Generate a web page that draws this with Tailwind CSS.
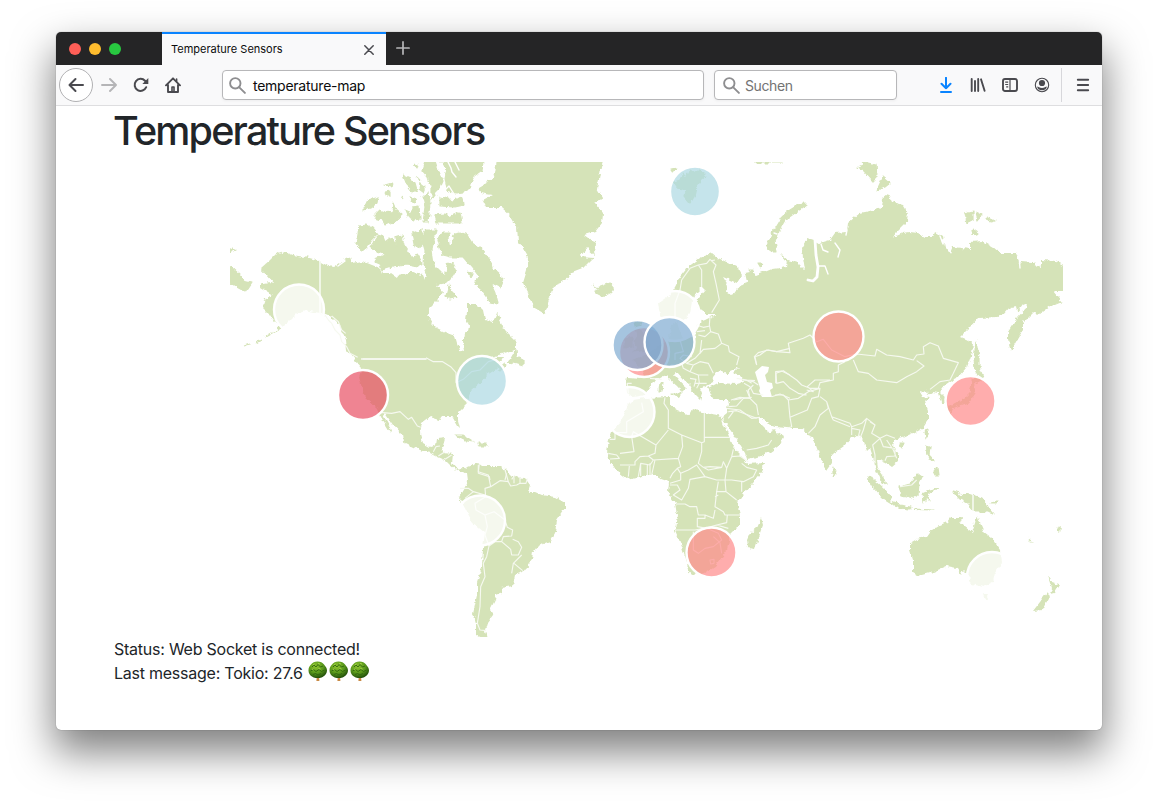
<!DOCTYPE html>
<html lang="de">
<head>
<meta charset="utf-8">
<title>Temperature Sensors</title>
<script src="https://cdn.jsdelivr.net/npm/@tailwindcss/browser@4"></script>
</head>
<body class="h-[810px] w-[1158px] overflow-hidden bg-white px-14 pt-8 font-['Inter',sans-serif]">
<div class="flex h-[698px] w-[1046px] flex-col overflow-hidden rounded-[5px] bg-white shadow-[0_0_1px_rgba(0,0,0,0.5),0_20px_40px_2px_rgba(0,0,0,0.5)]">
  <!-- tab strip -->
  <div class="flex h-[33px] shrink-0 bg-[#252526]">
    <div class="flex w-[106px] items-center gap-2 pl-[13px] pt-px">
      <span class="size-3 rounded-full bg-[#ff5f57]"></span><span class="size-3 rounded-full bg-[#febc2e]"></span><span class="size-3 rounded-full bg-[#28c840]"></span>
    </div>
    <div class="flex w-[224px] items-center justify-between border-t-2 border-[#0a84ff] bg-[#f9f9fa] pl-[9px] pr-3">
      <span class="text-[11px] text-[#0c0c0d]">Temperature Sensors</span>
      <svg class="size-[10px]" viewBox="0 0 10 10" fill="none" stroke="#4a4a4f" stroke-width="1.5" stroke-linecap="round"><path d="M.8.8l8.4 8.4M9.2.8L.8 9.2"/></svg>
    </div>
    <svg class="ml-[10px] mt-[9px] size-[14px]" viewBox="0 0 14 14" stroke="#b8b8ba" stroke-width="1.7" stroke-linecap="round"><path d="M7 .9v12.2M.9 7h12.2"/></svg>
  </div>
  <!-- toolbar -->
  <div class="flex h-[41px] shrink-0 items-center border-b border-[#dedee0] bg-[#f9f9fa]">
    <div class="ml-[3px] flex size-[34px] items-center justify-center rounded-full border border-[#b1b1b3] bg-white">
      <svg class="size-4" viewBox="0 0 16 16" fill="none" stroke="#4a4a4f" stroke-width="2" stroke-linecap="round" stroke-linejoin="round"><path d="M15 8H1.5M7.5 2l-6 6 6 6"/></svg>
    </div>
    <svg class="ml-2 size-4" viewBox="0 0 16 16" fill="none" stroke="#b5b5b7" stroke-width="1.9" stroke-linecap="round" stroke-linejoin="round"><path d="M1 8h13.5M9 2l6 6-6 6"/></svg>
    <svg class="ml-4 size-4" viewBox="0 0 16 16" fill="none" stroke="#4a4a4f" stroke-width="2" stroke-linecap="round"><path d="M13.2 10.2A6 6 0 1 1 12 3.7L13.5 5.3"/><path d="M15.3 1v6H9.3z" fill="#4a4a4f" stroke="none"/></svg>
    <svg class="ml-4 size-4" viewBox="0 0 16 16" fill="none" stroke="#4a4a4f" stroke-width="1.9" stroke-linecap="round" stroke-linejoin="round"><path d="M1 8.3L8 1.3l7 7M3 8v7h10V8"/><path d="M7 14.8V10h2v4.8M11.6 2v2.2" stroke-width="1.6"/></svg>
    <div class="ml-[41px] flex h-[30px] w-[482px] items-center rounded-[4px] border border-[#b7b7b9] bg-white pl-[6px] shadow-[0_1px_3px_rgba(0,0,0,0.05)]">
      <svg class="size-[17px]" viewBox="0 0 17 17" fill="none" stroke="#8e8e90" stroke-width="1.9" stroke-linecap="round"><circle cx="6.3" cy="6.3" r="5.2"/><path d="M10.3 10.3l5.6 5.6"/></svg>
      <span class="ml-[7px] text-[14px] tracking-[-0.25px] text-[#0c0c0d]">temperature-map</span>
    </div>
    <div class="ml-[10px] flex h-[30px] w-[183px] items-center rounded-[4px] border border-[#b7b7b9] bg-white pl-2 shadow-[0_1px_3px_rgba(0,0,0,0.05)]">
      <svg class="size-[17px]" viewBox="0 0 17 17" fill="none" stroke="#8e8e90" stroke-width="1.9" stroke-linecap="round"><circle cx="6.3" cy="6.3" r="5.2"/><path d="M10.3 10.3l5.6 5.6"/></svg>
      <span class="ml-[5px] text-[14px] tracking-[-0.4px] text-[#737373]">Suchen</span>
    </div>
    <svg class="ml-[41px] size-4" viewBox="0 0 16 16" fill="none" stroke="#0a84ff" stroke-width="2" stroke-linecap="round" stroke-linejoin="round"><path d="M8 .8v10.400M3.500 6.800L8 11.300l4.500-4.500M3 15h10"/></svg>
    <svg class="ml-4 size-4" viewBox="0 0 16 16" fill="none" stroke="#4a4a4f" stroke-width="1.9" stroke-linecap="round"><path d="M1.700 2v12M5 4v10M8.200 2v12M11 2.300L14.600 13.800"/></svg>
    <svg class="ml-4 size-4" viewBox="0 0 16 16" fill="none" stroke="#4a4a4f" stroke-width="1.9"><rect x="1" y="2" width="14" height="12" rx="2"/><path d="M8 2v12M3.200 5.200h3M3.200 7.500h3M4.200 9.800h2" stroke-width="1.2"/></svg>
    <svg class="ml-4 size-4" viewBox="0 0 16 16" fill="#4a4a4f"><circle cx="8" cy="8" r="6.7" fill="none" stroke="#4a4a4f" stroke-width="1.1"/><circle cx="8" cy="6" r="3.1"/><path d="M3.200 9.400c1.200 0 2.300 1.500 4.800 1.500s3.600-1.500 4.800-1.500c0 2-2 3.800-4.800 3.800S3.200 11.400 3.200 9.400z"/></svg>
    <div class="ml-[11px] h-[34px] w-px bg-[#d7d7db]"></div>
    <svg class="ml-[13px] size-4" viewBox="0 0 16 16" stroke="#4a4a4f" stroke-width="1.9" stroke-linecap="round"><path d="M2.800 2.800h10.400M2.800 8h10.400M2.800 13.200h10.400"/></svg>
  </div>
  <!-- page -->
  <div class="flex flex-col pl-[58px] text-[#212529]">
    <h1 class="-ml-px h-[56px] pt-[1px] text-[39.5px] font-medium leading-[48px] tracking-[-1.8px]">Temperature Sensors</h1>
    <svg class="ml-[116px] h-[475px] w-[833px]" viewBox="230 162 833 475">
      <defs>
        <filter id="coast" filterUnits="userSpaceOnUse" x="220" y="152" width="853" height="495" color-interpolation-filters="sRGB">
          <feTurbulence type="fractalNoise" baseFrequency="0.2" numOctaves="3" seed="7" result="n"/>
          <feDisplacementMap in="SourceGraphic" in2="n" scale="5" xChannelSelector="R" yChannelSelector="G"/>
        </filter>
      </defs>
      <g fill="#d5e3b8" filter="url(#coast)">
        <!-- North America -->
        <path d="M261 268L270 260 275 255 284 252 292 255 305 257 319 261 328 266 333 267 342 261 350 257 352 263 362 261 372 265 380 268 382 273 390 273 397 278 398 275 408 273 413 273 423 275 425 280 428 273 432 267 433 263 440 270 445 275 447 263 453 262 457 270 453 277 447 283 437 285 443 292 440 297 430 307 427 315 432 323 437 328 447 333 455 336 457 343 460 350 464 351 463 342 463 336 468 332 469 325 466 320 467 312 467 304 477 304 483 310 485 320 492 323 497 312 500 320 505 330 512 337 517 342 517 349 512 351 492 357 503 357 498 367 495 370 487 375 480 383 470 392 468 403 458 413 458 420 460 428 457 425 453 418 452 416 443 416 440 420 430 417 422 423 420 433 423 443 430 447 436 445 437 439 445 438 442 448 443 453 453 454 452 463 458 470 463 468 468 471 461 473 455 469 450 465 445 460 438 457 430 453 425 452 413 447 403 442 402 435 393 425 385 413 383 415 389 425 392 434 387 428 380 417 377 408 365 397 362 388 359 377 362 368 355 360 347 350 346 340 343 333 338 323 332 317 322 313 313 312 305 310 297 313 292 318 283 327 275 332 280 326 275 320 272 319 268 313 262 307 265 298 273 295 268 292 260 287 262 283 273 282 267 275Z"/>
        <path fill="none" stroke="#d5e3b8" stroke-width="1.2" d="M281 328L272 333 265 337M261 340L256 343M250 344L244 346" />
        <g stroke="#d5e3b8" stroke-width="1.2" stroke-linejoin="round">
        <path d="M359 226L367 225 373 228 378 234 372 240 367 247 362 251 356 243 358 235ZM371 247L377 238 382 234 385 242 390 238 393 240 397 247 395 237 402 235 404 245 412 257 418 255 422 263 418 267 407 265 398 266 388 268 382 270 380 264 375 262 377 257 387 255 377 252ZM375 215L380 210 385 212 392 213 393 203 396 210 402 215 398 220 390 223 385 225 382 220 375 218ZM363 210L368 200 378 197 377 203 370 208ZM385 192L391 191 391 196 386 196ZM385 185L392 183 391 187ZM403 175L410 178 415 183 417 190 412 192 407 185ZM405 210L412 213 412 207 419 206 420 219 414 220 408 217ZM412 233L422 230 422 245 415 248ZM425 230L436 230 434 240 432 250 434 265 428 275 424 265 425 250 422 240ZM420 183L425 187 423 192 419 189ZM414 164L418 165 417 169ZM423 198L428 193 430 203 428 222 423 222 425 207ZM425 160L435 160 438 170 443 180 440 187 435 192 430 183 428 177 422 170ZM439 160L483 160 482 170 475 175 472 180 470 188 463 192 455 193 447 190 445 178 447 168ZM440 197L453 200 463 197 464 205 455 207 440 206ZM435 215L445 214 448 217 460 212 462 223 437 223ZM438 240L442 232 450 232 448 238 450 250 452 242 455 233 460 232 467 235 472 243 482 250 490 260 492 268 503 278 500 287 490 282 495 293 497 303 490 302 480 288 475 285 478 275 472 267 463 257 450 257 442 255ZM446 296L449 285 453 292 458 297 450 299ZM409 187L413 191M402 196L404 199M416 177L420 180M410 197L417 199 414 203ZM432 186L436 195 432 200ZM468 272L472 273 470 277ZM509 362L516 350 517 357 523 360 523 366 517 364ZM455 435L463 435 474 442 467 441ZM478 443L485 443 488 446 479 446ZM498 368L505 362 506 366 501 370Z"/>
        </g>
        <!-- Greenland, Iceland -->
        <path d="M497 158L495 173 490 180 478 187 480 193 492 195 483 200 487 208 502 208 510 215 517 227 518 242 522 247 528 257 527 270 523 283 528 293 533 307 545 314 548 303 553 288 560 283 568 278 572 272 585 267 594 258 580 257 587 248 595 255 596 243 585 235 595 232 602 223 603 213 595 203 603 198 597 188 599 180 601 167 604 158ZM592 284L598 287 606 284 611 282 615 287 611 293 603 297 597 294 594 291 598 289Z"/>
        <!-- South America -->
        <path d="M460 470L465 470 468 467 478 463 482 466 500 466 507 472 512 477 525 478 530 485 528 492 535 492 542 495 555 497 565 503 565 508 557 520 555 533 550 542 538 546 533 552 532 560 523 572 515 575 514 580 513 586 502 588 502 593 496 595 495 600 490 610 493 615 487 623 485 630 487 640 476 635 476 623 473 613 477 595 477 583 482 567 483 547 485 533 473 523 462 503 459 498 465 488 468 480 467 472Z"/>
        <!-- Europe and Asia -->
        <path d="M658 303L670 295 675 287 680 277 688 267 700 258 712 253 718 258 737 267 742 275 737 283 723 277 728 285 727 292 733 295 738 288 747 282 745 273 750 272 757 275 772 269 787 267 788 260 798 263 805 270 803 257 802 248 808 238 814 240 820 243 830 240 835 233 847 232 848 223 860 213 875 210 882 207 883 198 888 194 892 202 903 205 908 213 907 222 897 232 892 238 903 233 910 232 918 233 925 237 933 237 935 232 943 237 945 247 950 254 953 247 970 249 970 242 983 241 993 247 1000 253 1015 253 1019 264 1021 262 1033 263 1042 267 1042 260 1055 261 1068 267 1068 291 1053 291 1062 302 1050 307 1040 314 1033 313 1023 323 1023 330 1017 340 1011 351 1008 340 1008 332 1017 318 1027 307 1028 303 1023 305 1018 312 1017 306 1010 307 1003 315 997 317 978 318 970 327 960 337 967 340 973 343 972 353 967 367 958 377 952 380 945 385 940 392 945 397 944 403 941 403 938 393 933 392 928 395 927 390 920 392 923 397 930 398 925 402 928 410 928 420 923 428 913 433 902 438 895 440 893 445 898 455 898 462 892 467 885 462 880 460 877 460 878 468 883 475 887 486 882 482 876 470 873 457 870 448 867 451 863 440 858 435 852 437 843 447 832 455 832 463 827 470 822 462 815 443 813 437 808 435 805 430 800 428 787 428 775 427 770 425 763 418 758 417 760 423 767 430 768 433 775 429 778 433 784 437 780 445 770 452 757 457 747 459 745 453 737 440 727 425 722 417 727 413 729 403 728 400 720 400 712 397 708 388 712 386 718 383 737 384 744 382 742 377 733 373 739 367 730 371 727 375 722 371 717 372 713 377 712 383 705 387 700 388 702 393 700 400 695 395 690 385 683 379 677 372 674 374 680 382 687 388 682 393 678 387 668 378 662 376 655 380 650 387 645 395 633 397 627 393 626 383 627 377 645 378 640 367 632 360 645 355 660 345 668 340 672 325 677 322 680 332 683 338 695 337 697 323 705 320 717 314 705 314 697 308 698 298 705 290 702 287 697 292 692 302 690 313 682 322 673 317 662 317 659 310Z"/>
        <!-- Africa, Madagascar -->
        <path d="M722 417L723 423 728 435 733 447 738 453 745 460 747 464 764 463 762 472 753 483 742 495 737 503 740 515 740 525 730 535 727 550 722 557 715 567 705 573 692 575 688 570 687 562 682 547 675 530 677 515 675 503 668 492 669 482 660 479 657 475 647 475 637 477 627 479 618 472 610 462 607 453 609 440 612 432 623 418 628 405 633 400 645 398 670 397 670 405 678 410 690 415 693 409 705 413 718 415ZM761 518L763 525 755 549 748 548 747 540 750 533 757 527Z"/>
        <g stroke="#d5e3b8" stroke-width="1.2" stroke-linejoin="round">
        <!-- islands of Europe and the Arctic -->
        <path d="M634 322L642 322 640 328 645 335 650 345 648 350 634 352 638 346 634 342 638 336ZM625 338L632 337 632 346 625 348ZM674 182L680 180 683 173 686 179 690 170 694 173 700 170 706 176 701 180 697 186 695 196 690 203 684 196 686 190 678 188ZM671 169L677 168 673 172ZM767 247L773 232 782 217 790 210 803 202 806 205 795 213 785 220 778 232 775 240 777 252 770 252ZM781 255L789 262 785 260ZM858 167L863 170 873 181 877 177 876 165 867 163ZM858 160L868 160 865 164ZM877 190L883 177 890 183 885 187ZM965 213L973 211 973 220 967 223ZM976 212L982 215 978 220ZM987 217L995 221 990 222ZM972 229L978 233 973 235ZM754 160L785 160 782 163 757 163ZM230 266L240 275 243 281 252 283 246 292 233 285 225 283 225 264ZM226 248L235 250 229 253ZM758 263L763 263 761 268ZM749 270L753 270 752 274ZM660 383L663 382 662 391 659 391ZM672 393L681 393 679 397Z"/>
        <!-- islands of Asia -->
        <path d="M976 341L979 357 979 367 983 377 976 373 974 360ZM973 383L975 393 969 402 960 405 952 408 950 413 947 408 958 402 965 398 970 393ZM972 379L977 376 982 381 974 384ZM925 431L928 430 926 438ZM899 443L904 443 902 447ZM926 446L930 447 929 455 934 461 929 459ZM933 471L938 468 939 475 935 475ZM833 467L837 473 833 476ZM867 477L873 479 883 488 892 498 890 502 882 497 873 487ZM891 502L900 505 911 507 910 509 899 508ZM914 509L934 510 914 509.500ZM899 487L910 484 918 474 922 477 919 483 918 495 913 498 902 495ZM923 493L930 490 938 488 930 491.500 927 494 930 501 926 497 924 503ZM952 491L957 492 960 497 967 493 982 498 988 507 994 514 983 511 975 511 968 503 960 499ZM990 503L998 501 995 503Z"/>
        </g>
        <!-- Australia, New Zealand -->
        <path d="M910 543L917 539 927 537 932 530 940 525 947 522 950 518 962 518 960 523 972 532 975 523 977 515 980 523 984 532 992 538 1000 550 1002 562 995 573 993 582 983 587 972 584 967 573 964 570 961 575 957 568 947 566 933 572 918 576 913 573 913 560 910 550ZM982 594L989 594 986 600ZM1048 576L1053 583 1059 585 1054 593 1050 594 1052 588ZM1047 593L1050 596 1042 610 1033 611 1040 602ZM1057 529L1061 527 1060 532ZM1027 537L1033 542 1030 541Z"/>
      </g>
      <!-- Caspian Sea, Ob and Yenisei gulfs, fjords -->
      <path fill="#fff" d="M755 372L762 366 769 367 768 372 765 375 767 382 772 383 773 388 770 390 772 397 762 397 759 391 760 388Z"/>
      <g fill="none" stroke="#fff" stroke-linejoin="round" stroke-linecap="round">
        <path stroke-width="2.800" d="M808 280L813 281 817 277 818 267 816 255 815 240"/>
        <path stroke-width="1.400" d="M818 266L825 266 828 274M821 244L823 250 828 252M835 243L840 250 838 257M847 230L846 235M448 162L451 168 452 172 456 177M455 162L459 170M443 192L449 186 454 194M774 233L777 234M338 266L345 261M397 270L403 267M1019 256L1020 268M940 236L943 244"/>
      </g>
      <!-- country borders, three units to the pixel -->
      <g fill="none" stroke="#f6f9f0" stroke-width="3.400" stroke-linejoin="round">
        <path transform="translate(225 160) scale(.33333)" stroke-width="5" d="M285 303V460L298 470M408 597H605"/>
        <path transform="translate(225 160) scale(.33333)" d="M298 462L310 480 320 490 330 510 345 525 350 545 365 560 375 580 398 592M320 468L340 485 350 510 362 520"/>
        <path transform="translate(330 320) scale(.33333)" stroke-width="5" d="M98 117H288"/>
        <path transform="translate(330 320) scale(.33333)" d="M288 113L310 125 338 125 362 140 378 158V188L400 178 425 155 450 150 475 125 500 118M150 277L185 280 210 275 235 298 245 292 262 318 272 322M310 395L318 380 330 378M325 408L345 395M345 418L365 405M445 435L445 460 478 470 480 480M530 460L525 480M545 478L555 465"/>
        <path transform="translate(440 440) scale(.33333)" d="M118 72L115 95 145 105 152 140 180 122 205 125 195 90M205 125L212 138 230 135 240 130 240 112M222 112L222 130M240 130L258 130 262 115M152 140L135 145 137 170M60 145L85 145 100 155 75 175M100 155L135 165M137 170L105 190 108 210 135 225 162 215 195 240 202 262 218 270 215 288 190 290 185 305 212 328 215 345 235 345 245 322 235 305 218 298M135 225L142 260 135 285 147 318 165 305 185 305M147 318L140 350 130 370 135 410 122 440 120 500 112 550 120 570 138 572M245 345L220 370 215 400M222 370L248 392"/>
        <path transform="translate(590 240) scale(.33333)" d="M255 235L255 190 270 150 275 120 300 85 325 75 335 90 335 140M325 75L350 70 360 58 378 75 370 95 378 130 388 180 365 218M375 60L365 62M360 230L358 255 362 275 345 290 325 285M318 255L340 262 360 258M320 275L345 272M362 275L385 282 395 310 375 325 340 328 330 340 335 300M395 310L415 318 418 335 447 350 440 375M340 328L315 355 290 370 270 355 280 345 305 350M290 370L310 375 330 365 355 370 370 400M310 375L300 395 325 405 355 405M300 395L280 385 275 370M325 405L328 430 350 430M315 430L328 430 320 445M300 415L318 418 312 440M255 360L255 340 280 335 270 300 235 305M235 380L245 375 270 375M125 430L112 430 115 460M180 415L215 418M500 375L495 350 510 345 530 330 560 335 600 325M440 415L470 420 485 430M462 430L480 440 490 460 520 465M470 420L495 422M557 430L557 395 575 393 600 405M545 470L570 462 600 475M423 480L450 472 480 475 470 450"/>
        <path transform="translate(590 380) scale(.33333)" d="M225 52L222 70 235 90 235 145 275 165 335 188M343 98V185L335 188 335 215 325 250 340 262 355 270 395 262M343 172H422M275 165L278 200 265 235 272 260 262 265M235 150L198 195 130 155 125 170 132 215 90 220M198 195L195 220 175 228 150 230 135 245 135 255 90 255M60 178H75V158H110V125L160 95 155 68M55 220L80 225 88 235 60 237M175 228L190 240 180 255 152 250 145 290M190 240L265 235M115 290L118 258M152 250V288M172 252V286M180 250V285M195 240L185 285M240 295L248 280 262 265 272 280 272 300 240 310M272 280L295 270 320 255 345 290 300 298 295 325 275 360 250 345 270 330 262 315 240 315M345 290L380 300 405 300 410 265 400 245 395 262 360 260 340 262M410 265L425 230 430 208M425 230L450 228 475 245M455 250L470 262 500 270 490 290 460 305 425 300 405 300M455 305V335M405 300L408 335 380 335 385 305M408 335L440 360M380 335L375 380 400 395 405 405 450 405M375 350L385 345M258 372H285L300 380 320 380 325 405 345 405 345 415 322 415V440L350 445M255 450H315L370 440M345 405L370 415 375 390M345 445L380 435 410 428 412 405M380 435L415 445M310 455V510L325 520 345 505 370 500 395 480 385 460 350 445M370 470L390 488 395 520M360 540L372 538 372 550 362 552ZM415 80L440 78 460 55 485 52M415 95L440 92 500 115M415 115L430 95M470 210L500 205 535 195 545 180"/>
        <path transform="translate(720 330) scale(.33333)" d="M110 105L103 80 115 68 145 60 170 65 210 68 205 40 250 25 270 15 290 35 310 28 335 60 375 80 410 72 465 78 470 58 500 75 540 80 580 90 590 75 612 72 610 50 630 38 655 48 670 85 715 98 700 130 690 150 660 155 630 178M400 90L415 125 445 130 470 150 530 158 560 140 590 125 612 108 590 92M375 95L355 105 355 125 340 130 340 150 300 158 295 175 270 175 245 165 230 150 190 122 168 130 170 160 190 155 210 175 235 190 260 195M165 195L190 195 205 210 235 205 265 185 300 175 295 200 275 205 262 240 210 262 205 210M260 180L280 185 262 170 285 150 330 150M210 262L215 290 200 295M300 200L320 215 325 235 300 255 285 290 265 310M320 215L335 260 390 280 395 290 425 280 440 265 465 285 450 275M335 260L340 270 390 290M395 290L395 315M395 295L420 300 415 320M440 265L430 300 420 325M465 285L455 310 480 325 500 315 525 325M480 325L458 345 465 375 465 400M480 325L490 350 525 355 525 378 500 380 495 392M500 330L520 360 530 385M540 470L575 465 590 450M20 235L60 240 95 265 120 262M40 210L65 205M100 165L85 180 90 205 110 225 115 255M70 150L100 155 115 165"/>
        <path stroke-width="5" transform="translate(720 330) scale(.33333)" d="M759 495V540"/>
      </g>
      <!-- sensors -->
      <g stroke="#fff" stroke-width="2.400" fill-opacity=".7">
        <g fill="#fff" fill-opacity=".76"><circle cx="675" cy="316" r="25"/><circle cx="299" cy="309.500" r="25"/><circle cx="629.500" cy="412" r="25"/><circle cx="480" cy="520.500" r="25"/><circle cx="992" cy="577" r="25"/></g>
        <g fill="#ff8a8a"><circle cx="644" cy="352" r="25"/><circle cx="711.500" cy="552.500" r="25"/><circle cx="838.500" cy="336.500" r="25"/><circle cx="970.500" cy="401" r="25"/></g>
        <g fill="#add8e2"><circle cx="482" cy="381" r="25"/><circle cx="695" cy="191.500" r="25"/></g>
        <g fill="#7fabd2"><circle cx="637.500" cy="345" r="25"/><circle cx="669.500" cy="342" r="25"/></g>
        <circle cx="363" cy="395" r="25" fill="#e85064"/>
      </g>
    </svg>
    <div class="text-[16px] leading-6 tracking-[-0.24px]">
      <p>Status: Web Socket is connected!</p>
      <p class="flex items-center">Last message: Tokio: 27.6
        <svg class="ml-[5px] mb-1 h-5 w-[63px]" viewBox="0 0 63 20" role="img" aria-label="🌳🌳🌳">
          <defs>
            <radialGradient id="leaf" cx=".4" cy=".3" r=".7"><stop offset="0" stop-color="#8fc42e"/><stop offset=".55" stop-color="#5b9a1c"/><stop offset="1" stop-color="#24520b"/></radialGradient>
            <g id="tree"><path d="M8.900 14h2l.5 6H8.400z" fill="#c88a45"/><path d="M9.500.5c3 0 5 1 6.500 3s3 3.500 3 6-1.500 5-4 6.300-3 1.200-5.300 1.200-3 .1-5.300-1.200S.5 12.500.5 9.500s1-4.200 2.500-6S6.500.5 9.500.5z" fill="url(#leaf)"/><path d="M4 6l2-2 2 2 2-2.500L12.500 6 15 5M2.500 10l3-1.500 2.500 2 3-2 2.500 2 3-1.500M5 13.500l2.500-1L10 14l3-1.500" fill="none" stroke="#2f640d" stroke-width=".9"/><path d="M5 4l1.500-1.200M10 2.500l2 .5M4 8.500l1.500-.5M10.500 7.500l2 .5" stroke="#b4dc55" stroke-width=".8"/></g>
          </defs>
          <use href="#tree"/><use href="#tree" x="21"/><use href="#tree" x="42"/>
        </svg>
      </p>
    </div>
  </div>
</div>
</body>
</html>
